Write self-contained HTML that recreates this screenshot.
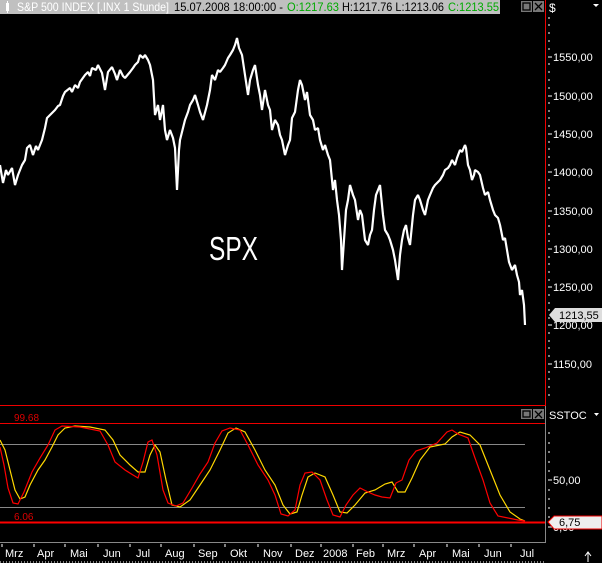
<!DOCTYPE html>
<html><head><meta charset="utf-8"><style>
body{margin:0;width:602px;height:563px;background:#000;overflow:hidden;font-family:"Liberation Sans",sans-serif}
svg{position:absolute;left:0;top:0}
</style></head><body>
<svg width="602" height="563" viewBox="0 0 602 563" xmlns="http://www.w3.org/2000/svg" font-family="Liberation Sans, sans-serif">
<rect x="0" y="0" width="602" height="563" fill="#000"/>
<!-- header -->
<rect x="0" y="0" width="500" height="14" fill="#c0c0c0"/>
<rect x="6" y="3" width="3" height="8" fill="#fff"/>
<rect x="7" y="1" width="1" height="12" fill="#fff"/>
<text x="17" y="11" font-size="12" fill="#fff" textLength="152" lengthAdjust="spacingAndGlyphs">S&amp;P 500 INDEX [.INX  1 Stunde]</text>
<text x="174" y="11" font-size="12" fill="#000" textLength="109" lengthAdjust="spacingAndGlyphs">15.07.2008 18:00:00 -</text>
<text x="287" y="11" font-size="12" fill="#0a0" textLength="52" lengthAdjust="spacingAndGlyphs">O:1217.63</text>
<text x="342" y="11" font-size="12" fill="#000" textLength="102" lengthAdjust="spacingAndGlyphs">H:1217.76 L:1213.06</text>
<text x="448" y="11" font-size="12" fill="#0a0" textLength="51" lengthAdjust="spacingAndGlyphs">C:1213.55</text>
<!-- buttons -->
<rect x="521" y="1" width="11" height="11" fill="#777"/><rect x="523" y="3" width="7" height="7" fill="none" stroke="#000" stroke-width="1.3"/>
<rect x="533" y="1" width="11" height="11" fill="#777"/><path d="M535 3L542 10M542 3L535 10" stroke="#000" stroke-width="1.3"/>
<text x="549" y="12" font-size="12" fill="#fff">$</text>
<path d="M593 4h6l-3 3z" fill="#fff"/>
<!-- red frame -->
<line x1="545.5" y1="0" x2="545.5" y2="406" stroke="#e00" stroke-width="1"/>
<line x1="0" y1="405.5" x2="545" y2="405.5" stroke="#e00"/>
<!-- price axis ticks -->
<g stroke="#fff" stroke-width="1">
<path d="M548 18h2M548 25h2M548 33h2M548 41h2M548 49h2M548 57h4M548 64h2M548 72h2M548 80h2M548 88h2M548 96h4M548 103h2M548 111h2M548 118h2M548 126h2M548 134h4M548 142h2M548 149h2M548 157h2M548 165h2M548 172h4M548 180h2M548 188h2M548 195h2M548 203h2M548 211h4M548 218h2M548 226h2M548 234h2M548 241h2M548 249h4M548 257h2M548 264h2M548 272h2M548 280h2M548 287h4M548 295h2M548 303h2M548 310h2M548 318h2M548 325h4M548 333h2M548 341h2M548 348h2M548 356h2M548 364h4M548 372h2M548 379h2M548 387h2M548 395h2"/>
</g>
<g font-size="11" fill="#fff">
<text x="553" y="61">1550,00</text>
<text x="553" y="100">1500,00</text>
<text x="553" y="138">1450,00</text>
<text x="553" y="176">1400,00</text>
<text x="553" y="215">1350,00</text>
<text x="553" y="253">1300,00</text>
<text x="553" y="291">1250,00</text>
<text x="553" y="329">1200,00</text>
<text x="553" y="368">1150,00</text>
</g>
<path d="M549 315L555 308H602V322H555Z" fill="#ddd"/>
<text x="559" y="319" font-size="11" fill="#000">1213,55</text>
<!-- SPX -->
<text x="209" y="260" font-size="33" fill="#fff" textLength="49" lengthAdjust="spacingAndGlyphs">SPX</text>
<!-- price line -->
<polyline fill="none" stroke="#fff" stroke-width="2.2" stroke-linejoin="bevel" points="0,165 3,183 6,170 8,175 12,168 15,185 18,175 22,165 25,160 27,148 30,145 33,155 36,146 38,150 42,140 45,128 47,118 50,115 53,112 55,110 58,106 60,105 63,96 65,92 70,88 72,92 75,85 78,88 80,82 85,75 88,72 90,76 92,68 96,70 98,65 102,73 105,90 108,72 112,67 115,74 117,80 120,70 123,76 125,78 130,72 133,68 135,65 138,62 140,55 143,58 145,55 148,60 150,65 153,80 155,115 158,105 160,120 163,105 165,130 167,140 170,130 173,138 175,148 177,190 179,150 180,140 183,128 185,120 188,112 190,105 193,100 195,95 198,105 200,112 203,120 207,105 210,90 212,75 215,80 218,70 220,72 223,68 225,65 228,58 230,55 233,50 235,45 237,38 239,48 242,55 245,75 248,95 250,80 253,70 255,65 258,85 260,95 262,110 265,90 268,105 270,110 272,130 275,120 278,125 280,135 282,140 285,155 288,145 290,140 292,118 295,112 298,90 300,80 302,85 305,100 307,92 310,115 313,120 315,130 318,128 320,140 323,150 325,145 328,155 330,160 333,190 335,180 337,200 339,215 341,240 342,270 344,240 346,210 348,200 350,185 353,195 355,200 358,220 360,210 362,215 365,240 368,245 370,235 372,230 374,210 376,195 378,190 380,185 383,215 385,230 388,235 390,240 393,250 395,260 398,280 400,255 402,240 404,230 406,225 408,238 410,245 413,215 415,200 418,195 420,200 423,210 425,215 428,200 430,195 433,188 435,185 438,182 440,180 443,175 445,170 448,168 450,165 452,160 455,165 457,158 460,150 462,152 465,145 466,148 468,165 470,170 472,180 474,175 475,170 478,172 480,175 483,188 485,195 488,192 490,200 493,210 495,215 498,218 500,225 502,235 503,240 505,238 507,250 509,262 512,270 515,265 517,275 519,282 520,295 522,290 524,305 525,325"/>
<!-- stoch panel -->
<line x1="0" y1="444.5" x2="525" y2="444.5" stroke="#888"/>
<line x1="0" y1="507.5" x2="525" y2="507.5" stroke="#888"/>
<line x1="0" y1="522.5" x2="545" y2="522.5" stroke="#f00" stroke-width="2"/>
<text x="14" y="421" font-size="10" fill="#d00">99.68</text>
<text x="14" y="520" font-size="10" fill="#d00">6.06</text>
<rect x="521" y="409" width="11" height="10" fill="#777"/><rect x="523" y="411" width="7" height="6" fill="none" stroke="#000" stroke-width="1.3"/>
<rect x="533" y="409" width="11" height="10" fill="#777"/><path d="M535 411L542 418M542 411L535 418" stroke="#000" stroke-width="1.3"/>
<line x1="0" y1="423.5" x2="545" y2="423.5" stroke="#e00"/>
<line x1="545.5" y1="406" x2="545.5" y2="543" stroke="#888"/>
<polyline fill="none" stroke="#ffd700" stroke-width="1.2" points="0,440 5,450 10,470 15,490 20,499 25,497 30,485 38,470 45,460 52,447 58,435 65,428 75,426 90,427 105,430 113,440 120,455 130,465 138,472 145,472 150,455 155,445 160,452 166,480 172,505 180,507 190,500 200,485 210,470 220,450 228,433 236,428 245,432 255,450 265,470 275,485 283,505 290,514 297,512 302,495 308,477 315,473 325,477 333,495 340,512 347,513 355,505 365,493 375,490 385,484 392,482 398,492 405,492 412,478 420,460 430,447 445,444 452,437 460,432 470,435 480,445 490,470 500,495 510,512 520,519 525,521"/>
<polyline fill="none" stroke="#f00" stroke-width="1.2" points="0,447 4,465 8,488 13,503 18,504 24,492 32,472 40,458 48,445 55,430 62,426 80,427 100,431 108,445 115,462 125,470 133,475 138,478 143,462 148,442 152,440 157,455 163,490 168,503 176,506 183,503 192,488 200,474 208,462 215,443 222,431 230,428 240,430 248,445 258,465 268,480 275,495 281,514 288,516 295,510 300,485 305,473 312,472 320,480 327,500 333,515 340,517 346,505 353,495 360,488 368,492 375,495 382,497 390,498 396,483 402,480 409,460 416,451 425,448 437,443 447,432 452,430 458,434 468,438 475,458 483,480 490,503 498,516 508,518 518,520 525,521"/>
<!-- stoch axis -->
<text x="549" y="419" font-size="11" fill="#fff">SSTOC</text>
<path d="M594 413h5l-2.5 3z" fill="#fff"/>
<g stroke="#fff"><path d="M548 433h2M548 443h2M548 452h2M548 462h2M548 471h2M548 480h4M548 490h2M548 499h2M548 508h2M548 517h2M548 527h4"/></g>
<text x="553" y="484" font-size="11" fill="#fff">50,00</text>
<text x="553" y="531" font-size="11" fill="#fff">0,00</text>
<path d="M548 522L554 516H602V529H554Z" fill="#eee" stroke="#e00"/>
<text x="559" y="526" font-size="11" fill="#000">6,75</text>
<!-- date axis -->
<line x1="0" y1="542.5" x2="545" y2="542.5" stroke="#888"/>
<g stroke="#fff"><path d="M2 544v3M34 544v3M65 544v3M98 544v3M130 544v3M161 544v3M194 544v3M225 544v3M258 544v3M291 544v3M321 544v3M353 544v3M383 544v3M414 544v3M447 544v3M479 544v3M511 544v3"/></g>
<g font-size="11" fill="#fff">
<text x="5" y="557">Mrz</text><text x="37" y="557">Apr</text><text x="70" y="557">Mai</text><text x="103" y="557">Jun</text><text x="136" y="557">Jul</text><text x="165" y="557">Aug</text><text x="198" y="557">Sep</text><text x="230" y="557">Okt</text><text x="263" y="557">Nov</text><text x="295" y="557">Dez</text><text x="323" y="557">2008</text><text x="356" y="557">Feb</text><text x="387" y="557">Mrz</text><text x="419" y="557">Apr</text><text x="452" y="557">Mai</text><text x="484" y="557">Jun</text><text x="520" y="557">Jul</text>
</g>
<line x1="0" y1="562" x2="545" y2="562" stroke="#fff" stroke-dasharray="1 2"/>
<path d="M588 552v10M585 556l3-4 3 4" stroke="#fff" fill="none"/>
</svg>
</body></html>
